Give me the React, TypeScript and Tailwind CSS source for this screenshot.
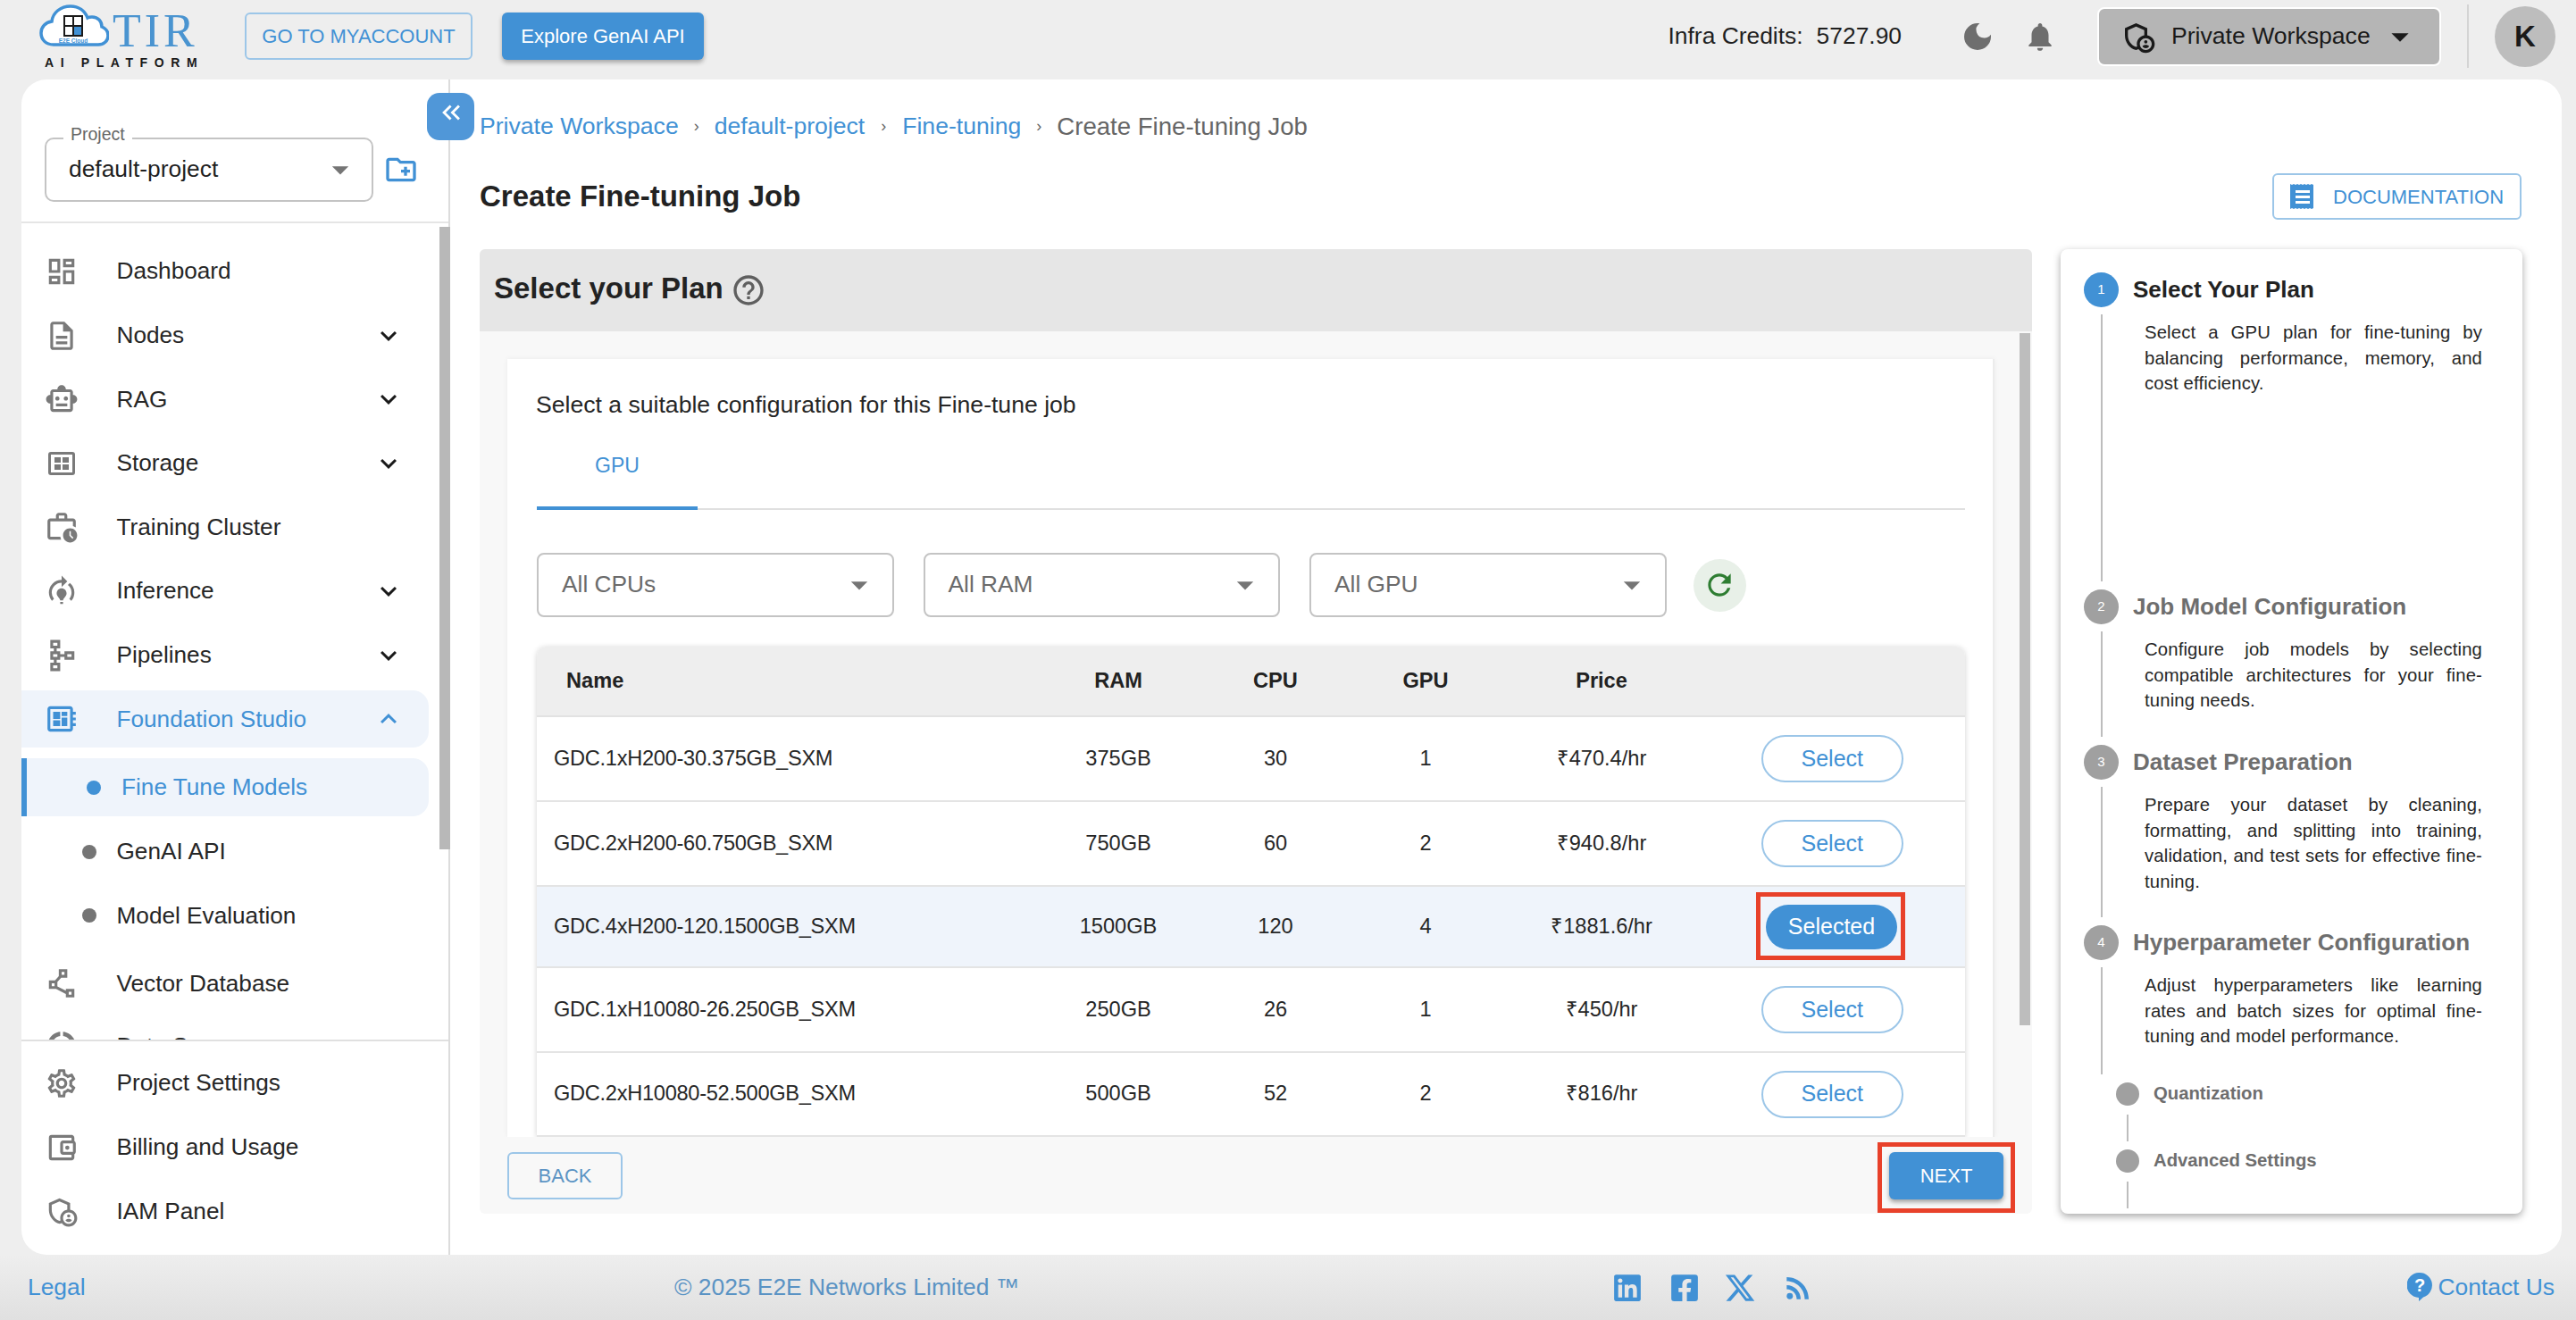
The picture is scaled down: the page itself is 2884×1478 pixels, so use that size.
import type { ReactNode } from "react";
import {
  MdOutlineDashboard,
  MdOutlineDescription,
  MdOutlineSmartToy,
  MdOutlineWorkHistory,
  MdOutlineModelTraining,
  MdOutlineSchema,
  MdOutlineDeveloperBoard,
  MdOutlinePolyline,
  MdOutlineSettings,
  MdOutlineAccountBalanceWallet,
  MdOutlineAdminPanelSettings,
  MdOutlineDataUsage,
  MdDarkMode,
  MdNotifications,
  MdOutlineCreateNewFolder,
  MdHelpOutline,
  MdRefresh,
  MdRssFeed,
  MdExpandMore,
  MdExpandLess,
  MdArrowDropDown,
  MdKeyboardDoubleArrowLeft,
} from "react-icons/md";
import { FaLinkedin, FaFacebookSquare } from "react-icons/fa";
import { FaXTwitter } from "react-icons/fa6";

function StorageIcon() {
  return (
    <svg viewBox="0 0 30 26" className="w-[30px] h-[26px]" fill="#7a7a7a">
      <path d="M3 0h24a3 3 0 0 1 3 3v20a3 3 0 0 1-3 3H3a3 3 0 0 1-3-3V3a3 3 0 0 1 3-3zm0 3v20h24V3z" fillRule="evenodd" />
      <rect x="7" y="6" width="7" height="6" />
      <rect x="16" y="6" width="7" height="6" />
      <rect x="7" y="14" width="7" height="6" />
      <rect x="16" y="14" width="7" height="6" />
    </svg>
  );
}

function Logo() {
  return (
    <div className="flex flex-col w-[180px]">
      <div className="flex items-start h-[54px]">
        <svg viewBox="0 0 78 52" className="w-[78px] h-[52px] shrink-0">
          <path
            d="M16 46C7 46 2 40 2 33c0-7 5-12 12-13C15 10 24 3 35 3c9 0 16 5 19 13 2-1 3-1 5-1 7 0 11 5 11 11 5 2 7 6 7 10 0 6-5 10-11 10z"
            fill="#ffffff"
            stroke="#4191d5"
            strokeWidth="3.5"
          />
          <rect x="28" y="14" width="20" height="22" fill="none" stroke="#1a1a1a" strokeWidth="2" />
          <path d="M38 14v22M28 25h20" stroke="#1a1a1a" strokeWidth="2" />
          <rect x="39" y="26" width="8" height="9" fill="#4191d5" />
          <text x="38" y="44" textAnchor="middle" fontSize="6.5" fontWeight="700" fill="#4191d5" fontFamily="Liberation Sans">
            E2E Cloud
          </text>
        </svg>
        <span className="ml-[4px] mt-[5px] text-[52px] leading-[52px] tracking-[4px] text-[#4a94d0] font-['Liberation_Serif',serif]">
          TIR
        </span>
      </div>
      <span className="mt-[4px] ml-[6px] text-[14px] leading-[16px] font-bold tracking-[7.6px] text-[#1a1a1a] whitespace-nowrap">
        AI PLATFORM
      </span>
    </div>
  );
}

function Header() {
  return (
    <header className="h-[89px] shrink-0 flex items-center pl-[44px] pr-[23px] pb-[8px]">
      <Logo />
      <button className="ml-[50px] w-[255px] h-[53px] rounded-[6px] border-2 border-[#9cc6e8] text-[#4191d5] text-[22px]">
        GO TO MYACCOUNT
      </button>
      <button className="ml-[33px] w-[226px] h-[53px] rounded-[6px] bg-[#4191d5] text-white text-[22px] shadow-[0_3px_5px_rgba(0,0,0,0.3)]">
        Explore GenAI API
      </button>
      <div className="ml-auto flex gap-[15px] text-[26.4px] text-[#1f1f1f] whitespace-nowrap">
        <span>Infra Credits:</span>
        <span>5727.90</span>
      </div>
      <MdDarkMode className="ml-[65px] text-[#6e6e6e]" size={40} />
      <MdNotifications className="ml-[31px] text-[#6e6e6e]" size={38} />
      <div className="ml-[45px] w-[385px] h-[66px] rounded-[8px] border-2 border-white bg-[#b5b5b5] flex items-center pl-[24px] text-[#1a1a1a]">
        <MdOutlineAdminPanelSettings size={40} />
        <span className="ml-[17px] text-[26.6px] whitespace-nowrap">Private Workspace</span>
        <MdArrowDropDown size={46} className="ml-[10px]" />
      </div>
      <div className="ml-[29px] w-[2px] h-[71px] bg-[#d4d4d4]" />
      <div className="ml-[29px] w-[68px] h-[68px] rounded-full bg-[#bdbdbd] flex items-center justify-center text-[33px] font-bold text-[#1a1a1a]">
        K
      </div>
    </header>
  );
}

function NavRow({
  icon,
  label,
  arrow,
  active,
  mb = "mb-[7.6px]",
}: {
  icon: ReactNode;
  label: string;
  arrow?: "down" | "up";
  active?: boolean;
  mb?: string;
}) {
  return (
    <div
      className={`w-[456px] h-[64px] ${mb} shrink-0 flex items-center pl-[25px] pr-[27px] rounded-r-[18px] ${
        active ? "bg-[#eff4fb] text-[#4191d5]" : "text-[#262626]"
      }`}
    >
      <span className={`w-[40px] h-[40px] flex items-center justify-center ${active ? "text-[#4191d5]" : "text-[#7a7a7a]"}`}>
        {icon}
      </span>
      <span className="ml-[41.5px] text-[26.2px]">{label}</span>
      {arrow === "down" && <MdExpandMore size={36} className="ml-auto text-[#1a1a1a]" />}
      {arrow === "up" && <MdExpandLess size={36} className="ml-auto text-[#4191d5]" />}
    </div>
  );
}

function SubRow({ label, active, mb = "mb-[7.6px]" }: { label: string; active?: boolean; mb?: string }) {
  if (active) {
    return (
      <div className={`w-[456px] h-[65px] ${mb} shrink-0 flex items-center pl-[67px] border-l-[6px] border-[#4191d5] bg-[#eff4fb] rounded-r-[18px] text-[#4191d5]`}>
        <span className="w-[16px] h-[16px] rounded-full bg-[#4191d5]" />
        <span className="ml-[23px] text-[26.2px]">{label}</span>
      </div>
    );
  }
  return (
    <div className={`w-[456px] h-[64px] ${mb} shrink-0 flex items-center pl-[68px] text-[#262626]`}>
      <span className="w-[16px] h-[16px] rounded-full bg-[#757575]" />
      <span className="ml-[22.5px] text-[26.2px]">{label}</span>
    </div>
  );
}

function Sidebar() {
  return (
    <aside className="relative w-[480px] shrink-0 flex flex-col border-r-2 border-[#dcdcdc]">
      <div className="h-[161px] shrink-0 border-b-2 border-[#e5e5e5] pl-[26px] pt-[65px] flex items-start">
        <div className="relative w-[368px] h-[72px] rounded-[10px] border-2 border-[#c4c4c4] flex items-center pl-[25px] pr-[13px] text-[26.4px] text-[#1f1f1f]">
          <span className="absolute left-[19px] -top-[18px] bg-white px-[8px] text-[19.5px] leading-[24px] text-[#666666]">Project</span>
          default-project
          <MdArrowDropDown size={44} className="ml-auto text-[#757575]" />
        </div>
        <MdOutlineCreateNewFolder size={40} className="ml-[11px] mt-[16px] text-[#4191d5]" />
      </div>
      <div className="h-[916px] shrink-0 overflow-hidden pt-[22px] flex flex-col border-b-2 border-[#e0e0e0]">
        <NavRow icon={<MdOutlineDashboard size={38} />} label="Dashboard" />
        <NavRow icon={<MdOutlineDescription size={38} />} label="Nodes" arrow="down" />
        <NavRow icon={<MdOutlineSmartToy size={38} />} label="RAG" arrow="down" />
        <NavRow icon={<StorageIcon />} label="Storage" arrow="down" />
        <NavRow icon={<MdOutlineWorkHistory size={38} />} label="Training Cluster" />
        <NavRow icon={<MdOutlineModelTraining size={38} />} label="Inference" arrow="down" />
        <NavRow icon={<MdOutlineSchema size={38} />} label="Pipelines" arrow="down" />
        <NavRow icon={<MdOutlineDeveloperBoard size={38} />} label="Foundation Studio" arrow="up" active mb="mb-[12px]" />
        <SubRow label="Fine Tune Models" active />
        <SubRow label="GenAI API" />
        <SubRow label="Model Evaluation" mb="mb-[12px]" />
        <NavRow icon={<MdOutlinePolyline size={38} />} label="Vector Database" mb="mb-[6px]" />
        <NavRow icon={<MdOutlineDataUsage size={38} />} label="Data Sources" arrow="down" />
      </div>
      <div className="flex flex-col pt-[15px]">
        <NavRow icon={<MdOutlineSettings size={38} />} label="Project Settings" />
        <NavRow icon={<MdOutlineAccountBalanceWallet size={38} />} label="Billing and Usage" />
        <NavRow icon={<MdOutlineAdminPanelSettings size={38} />} label="IAM Panel" />
      </div>
      {/* scroll thumb */}
      <div className="absolute left-[468px] top-[165px] w-[12px] h-[697px] bg-[#b8b8b8]" />
      {/* collapse toggle */}
      <div className="absolute left-[454px] top-[15px] w-[53px] h-[53px] rounded-[14px] bg-[#5097d8] flex items-center justify-center text-white z-10">
        <MdKeyboardDoubleArrowLeft size={34} className="-mt-[10px]" />
      </div>
    </aside>
  );
}

function FilterSelect({ label }: { label: string }) {
  return (
    <div className="w-[399.5px] h-[72px] rounded-[8px] border-2 border-[#c4c4c4] flex items-center pl-[26px] pr-[15px] text-[26.3px] text-[#6b6b6b]">
      {label}
      <MdArrowDropDown size={44} className="ml-auto text-[#757575]" />
    </div>
  );
}

const rows = [
  { name: "GDC.1xH200-30.375GB_SXM", ram: "375GB", cpu: "30", gpu: "1", price: "₹470.4/hr", h: "h-[95px]" },
  { name: "GDC.2xH200-60.750GB_SXM", ram: "750GB", cpu: "60", gpu: "2", price: "₹940.8/hr", h: "h-[95px]" },
  { name: "GDC.4xH200-120.1500GB_SXM", ram: "1500GB", cpu: "120", gpu: "4", price: "₹1881.6/hr", selected: true, h: "h-[91px]" },
  { name: "GDC.1xH10080-26.250GB_SXM", ram: "250GB", cpu: "26", gpu: "1", price: "₹450/hr", h: "h-[95px]" },
  { name: "GDC.2xH10080-52.500GB_SXM", ram: "500GB", cpu: "52", gpu: "2", price: "₹816/hr", h: "h-[94px]" },
];

const cols = "grid grid-cols-[551px_200px_152px_184px_210px_302px] items-center";

function PlanTable() {
  return (
    <div className="mt-[33px] w-[1599px] rounded-t-[10px] shadow-[0_1px_6px_rgba(0,0,0,0.18)]">
      <div className={`${cols} h-[79px] bg-[#eeeeee] rounded-t-[10px] border-b-2 border-[#e2e2e2] text-[23.6px] font-bold text-[#222222] text-center`}>
        <span className="pl-[33px] text-left">Name</span>
        <span>RAM</span>
        <span>CPU</span>
        <span>GPU</span>
        <span>Price</span>
        <span />
      </div>
      {rows.map((r) => (
        <div
          key={r.name}
          className={`${cols} ${r.h} border-b-2 border-[#e4e4e4] text-[23.6px] text-[#262626] text-center ${r.selected ? "bg-[#eff4fb]" : "bg-white"}`}
        >
          <span className="pl-[19px] text-left tracking-[-0.28px] whitespace-nowrap">{r.name}</span>
          <span>{r.ram}</span>
          <span>{r.cpu}</span>
          <span>{r.gpu}</span>
          <span>{r.price}</span>
          {r.selected ? (
            <div className="pl-[79px] flex">
              <div className="relative">
                <button className="w-[147px] h-[50px] rounded-full bg-[#4191d5] text-white text-[25px]">Selected</button>
                <div className="absolute -left-[11px] -right-[9px] -top-[14px] -bottom-[12px] border-[5px] border-[#e8412a]" />
              </div>
            </div>
          ) : (
            <div className="pl-[73.5px] flex">
              <button className="w-[159.5px] h-[53px] rounded-full border-2 border-[#9cc6e8] text-[#4191d5] text-[25px]">Select</button>
            </div>
          )}
        </div>
      ))}
    </div>
  );
}

function PlanPanel() {
  return (
    <section className="w-[1738px] shrink-0 flex flex-col bg-[#f8f8f8] rounded-[6px] overflow-hidden">
      <div className="h-[92px] shrink-0 bg-[#e6e6e6] flex items-center pl-[16px]">
        <h2 className="text-[33px] font-bold text-[#222222] pb-[5px]">Select your Plan</h2>
        <MdHelpOutline size={40} className="ml-[8px] text-[#5f5f5f]" />
      </div>
      <div className="h-[902px] shrink-0 flex overflow-hidden pl-[31px] pt-[31px]">
        <div className="w-[1665px] shrink-0 bg-white border-r-2 border-[#ececec] shadow-[0_0_6px_rgba(0,0,0,0.06)] pl-[33px] pt-[34px]">
          <p className="text-[26.6px] leading-[34px] text-[#262626] -ml-[1px]">Select a suitable configuration for this Fine-tune job</p>
          <div className="mt-[21px] border-b-2 border-[#e0e0e0] h-[80px] w-[1599px]">
            <div className="w-[180px] h-[80px] border-b-4 border-[#4191d5] flex justify-center pt-[13px] text-[23px] text-[#4191d5]">GPU</div>
          </div>
          <div className="mt-[48px] flex items-center gap-[33px]">
            <FilterSelect label="All CPUs" />
            <FilterSelect label="All RAM" />
            <FilterSelect label="All GPU" />
            <div className="-ml-[3px] w-[59px] h-[59px] rounded-full bg-[#e8f0e8] flex items-center justify-center text-[#2e7d32]">
              <MdRefresh size={38} />
            </div>
          </div>
          <PlanTable />
        </div>
        <div className="ml-[28px] w-[12px] h-[775px] -mt-[29px] bg-[#bdbdbd]" />
      </div>
      <div className="flex-1 flex items-center justify-between pl-[31px] pr-[32px]">
        <button className="w-[129px] h-[53px] rounded-[6px] border-2 border-[#9cc6e8] text-[22px] text-[#5c94c4]">BACK</button>
        <div className="relative">
          <button className="w-[128px] h-[53px] rounded-[6px] bg-[#4191d5] text-white text-[22px] shadow-[0_3px_5px_rgba(0,0,0,0.35)]">NEXT</button>
          <div className="absolute -left-[13px] -right-[13px] -top-[11px] -bottom-[15px] border-[5px] border-[#e8412a]" />
        </div>
      </div>
    </section>
  );
}

function Step({
  n,
  title,
  lines,
  h,
  active,
}: {
  n: number;
  title: string;
  lines: string;
  h: string;
  active?: boolean;
}) {
  return (
    <div className={`flex ${h} shrink-0`}>
      <div className="w-[39px] shrink-0 flex flex-col items-center">
        <span className={`w-[39px] h-[39px] shrink-0 rounded-full flex items-center justify-center text-white text-[15px] ${active ? "bg-[#4191d5]" : "bg-[#a0a0a0]"}`}>
          {n}
        </span>
        <span className="w-[2px] flex-1 mt-[8px] mb-[9px] bg-[#bdbdbd]" />
      </div>
      <div className="ml-[16px]">
        <h3 className={`h-[39px] leading-[39px] text-[26px] font-bold whitespace-nowrap ${active ? "text-[#222222]" : "text-[#6e6e6e]"}`}>{title}</h3>
        <p className="mt-[14px] ml-[13px] w-[378px] text-[20.3px] leading-[28.7px] tracking-[0.15px] text-[#262626] text-justify">{lines}</p>
      </div>
    </div>
  );
}

function SubStep({ title }: { title: string }) {
  return (
    <div className="ml-[36px] flex h-[75.5px] shrink-0">
      <div className="w-[26px] shrink-0 flex flex-col items-center">
        <span className="w-[26px] h-[26px] shrink-0 rounded-full bg-[#a0a0a0]" />
        <span className="w-[2px] h-[30px] mt-[10px] bg-[#bdbdbd]" />
      </div>
      <span className="ml-[16px] h-[24px] leading-[24px] text-[20.3px] font-bold text-[#6e6e6e]">{title}</span>
    </div>
  );
}

function Stepper() {
  return (
    <section className="w-[517px] shrink-0 bg-white rounded-[8px] shadow-[0_3px_8px_rgba(0,0,0,0.35)] pt-[26px] pl-[26px] flex flex-col overflow-hidden">
      <Step
        n={1}
        active
        h="h-[355px]"
        title="Select Your Plan"
        lines="Select a GPU plan for fine-tuning by balancing performance, memory, and cost efficiency."
      />
      <Step
        n={2}
        h="h-[174px]"
        title="Job Model Configuration"
        lines="Configure job models by selecting compatible architectures for your fine-tuning needs."
      />
      <Step
        n={3}
        h="h-[202px]"
        title="Dataset Preparation"
        lines="Prepare your dataset by cleaning, formatting, and splitting into training, validation, and test sets for effective fine-tuning."
      />
      <Step
        n={4}
        h="h-[175.5px]"
        title="Hyperparameter Configuration"
        lines="Adjust hyperparameters like learning rates and batch sizes for optimal fine-tuning and model performance."
      />
      <SubStep title="Quantization" />
      <SubStep title="Advanced Settings" />
    </section>
  );
}

function Crumb({ children }: { children: ReactNode }) {
  return <span className="text-[#4191d5]">{children}</span>;
}

function Main() {
  return (
    <main className="flex-1 min-w-0 pl-[33px] pr-[44px] pt-[34px] flex flex-col">
      <nav className="h-[37px] flex items-center text-[26.6px] text-[#666666] whitespace-nowrap">
        <Crumb>Private Workspace</Crumb>
        <span className="mx-[17px] text-[18px]">›</span>
        <Crumb>default-project</Crumb>
        <span className="mx-[18px] text-[18px]">›</span>
        <Crumb>Fine-tuning</Crumb>
        <span className="mx-[17px] text-[18px]">›</span>
        <span className="text-[27.6px]">Create Fine-tuning Job</span>
      </nav>
      <div className="mt-[34px] h-[52px] flex items-center justify-between">
        <h1 className="text-[33px] font-bold text-[#222222]">Create Fine-tuning Job</h1>
        <button className="mr-[1px] w-[279px] h-[52px] rounded-[6px] border-2 border-[#9cc6e8] flex items-center pl-[18px] text-[#4191d5] text-[22px]">
          <svg viewBox="0 0 28 30" className="w-[28px] h-[30px] shrink-0" fill="#4191d5">
            <path d="M0 1l2 1 2-1 2 1 2-1 2 1 2-1 2 1 2-1 2 1 2-1 2 1 2-1 2 1v26l-2 1-2-1-2 1-2-1-2 1-2-1-2 1-2-1-2 1-2-1-2 1-2-1-2 1z" />
            <rect x="6" y="8" width="16" height="3" fill="#ffffff" />
            <rect x="6" y="14" width="16" height="3" fill="#ffffff" />
            <rect x="6" y="20" width="16" height="3" fill="#ffffff" />
          </svg>
          <span className="ml-[20px]">DOCUMENTATION</span>
        </button>
      </div>
      <div className="mt-[33px] flex gap-[32px] h-[1080px]">
        <PlanPanel />
        <Stepper />
      </div>
    </main>
  );
}

function Footer() {
  return (
    <footer className="flex-1 flex items-center pl-[31px] pr-[24px] text-[26.4px] text-[#4191d5] bg-gradient-to-b from-[#eeeeee] to-[#e0e0e0]">
      <span className="w-[724px] shrink-0">Legal</span>
      <span className="w-[1052px] shrink-0 text-[#5a93c4]">© 2025 E2E Networks Limited ™</span>
      <FaLinkedin size={34} className="shrink-0 -ml-[2px]" />
      <FaFacebookSquare size={34} className="shrink-0 ml-[30px]" />
      <FaXTwitter size={36} className="shrink-0 ml-[27px]" />
      <MdRssFeed size={38} className="shrink-0 ml-[28px]" />
      <div className="ml-auto flex items-center gap-[6px]">
        <svg viewBox="0 0 28 32" className="w-[28px] h-[32px] shrink-0">
          <path d="M14 0a14 14 0 0 1 4 27.4L13 32v-4A14 14 0 0 1 14 0z" fill="#4191d5" />
          <text x="14" y="21" textAnchor="middle" fontSize="20" fontWeight="700" fill="#ffffff" fontFamily="Liberation Sans">
            ?
          </text>
        </svg>
        <span>Contact Us</span>
      </div>
    </footer>
  );
}

export default function App() {
  return (
    <div className="w-[2884px] h-[1478px] overflow-hidden bg-[#eeeeee] flex flex-col font-['Liberation_Sans',Arial,sans-serif]">
      <Header />
      <div className="mx-[16px] ml-[24px] h-[1316px] shrink-0 bg-white rounded-[28px] overflow-hidden flex">
        <Sidebar />
        <Main />
      </div>
      <Footer />
    </div>
  );
}
